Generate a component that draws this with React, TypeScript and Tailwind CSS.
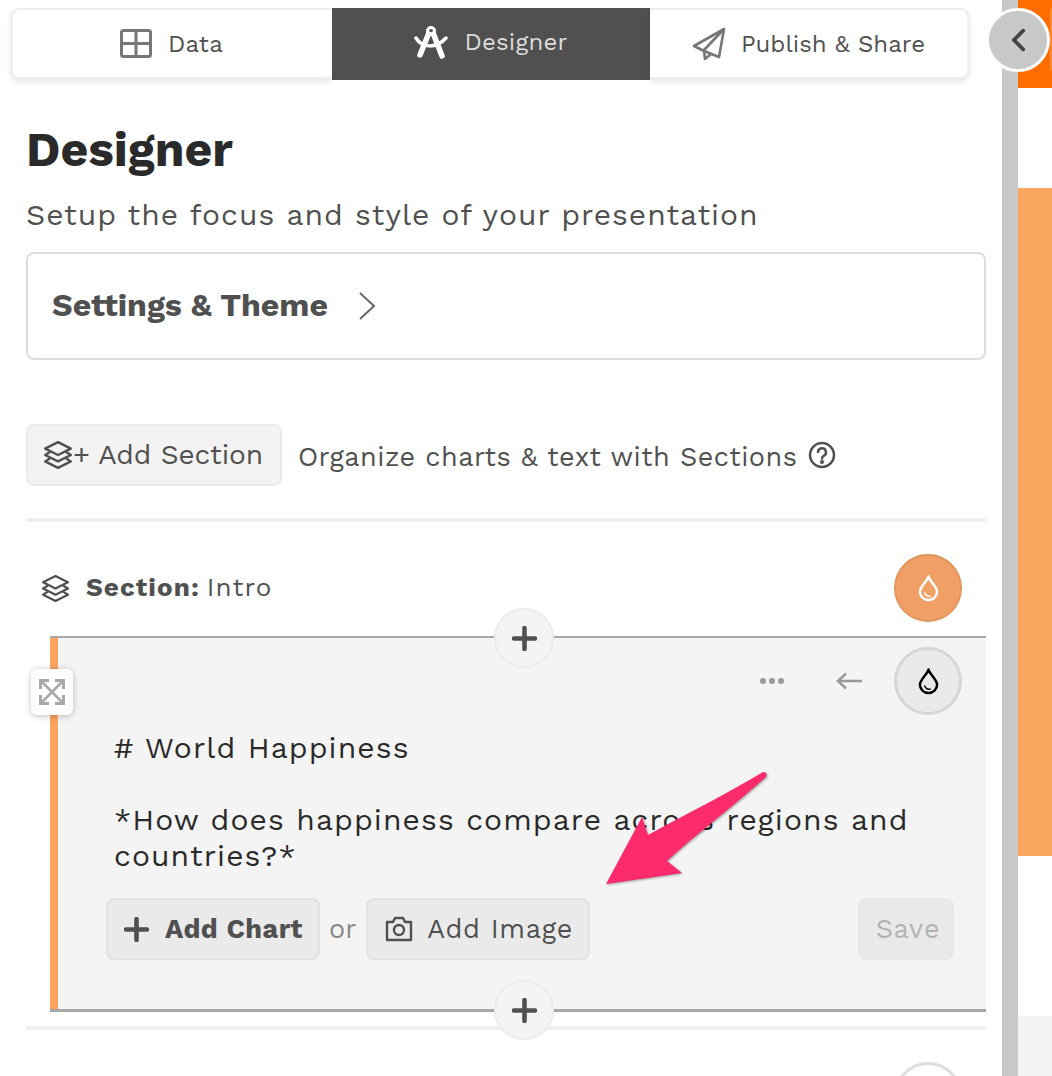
import React from "react";

const Layers = ({ className = "" }: { className?: string }) => (
  <svg viewBox="0 0 28 28" className={className} fill="none" stroke="currentColor" strokeWidth="2.2" strokeLinejoin="round" strokeLinecap="round">
    <path d="M14 2 L26 8 L14 14 L2 8 Z" />
    <path d="M6 11.5 L2 14 L14 20 L26 14 L22 11.5" />
    <path d="M6 17.5 L2 20 L14 26 L26 20 L22 17.5" />
  </svg>
);

const Drop = ({ className = "" }: { className?: string }) => (
  <svg viewBox="0 0 22 28" className={className} fill="none" stroke="currentColor" strokeWidth="2.6" strokeLinecap="round" strokeLinejoin="round">
    <path d="M11 2 C12 7 20 12 20 18 A9 8.5 0 0 1 2 18 C2 12 10 7 11 2 Z" />
    <path d="M7 19 C8 22 10 23 13 22.5" strokeWidth="1.4" />
  </svg>
);

const Plus = ({ className = "" }: { className?: string }) => (
  <svg viewBox="0 0 24 24" className={className} fill="none" stroke="currentColor" strokeWidth="4.4" strokeLinecap="round">
    <path d="M12 2 V22 M2 12 H22" />
  </svg>
);

const PlusCircle = ({ className }: { className: string }) => (
  <div className={`absolute left-[436px] w-[60px] h-[60px] rounded-full bg-[#f4f4f4] border-2 border-[#ececec] flex items-center justify-center text-[#505050] ${className}`}>
    <Plus className="w-[25px] h-[25px]" />
  </div>
);

export default function App() {
  return (
    <div className="relative flex w-[1052px] h-[1076px] overflow-hidden bg-white text-[#505050] font-['Work_Sans','Inter','Noto_Sans',sans-serif]">
      <div className="w-[1002px] shrink-0 relative">
        <div className="ml-[11px] mt-[8px] w-[958px] h-[72px] flex">
          <div className="w-[321px] h-[71px] flex items-center justify-center gap-[16px] pr-[2px] bg-white border-2 border-r-0 border-[#eeeeee] rounded-l-[8px] shadow-[0_3px_6px_rgba(0,0,0,0.1)] text-[24px] tracking-[0.2px]">
            <svg viewBox="0 0 32 30" className="w-[32px] h-[30px] text-[#777]" fill="none" stroke="currentColor" strokeWidth="3" strokeLinejoin="round">
              <rect x="1.5" y="1.5" width="29" height="26" rx="2" />
              <path d="M16 1.5 V27.5 M1.5 14.5 H30.5" />
            </svg>
            <span>Data</span>
          </div>
          <div className="w-[318px] h-[72px] flex items-center justify-center gap-[16px] pb-[4px] bg-[#505050] text-[#dcdcdc] text-[24px] tracking-[0.2px]">
            <svg viewBox="0 0 34 34" className="w-[34px] h-[34px] text-white" fill="none" stroke="currentColor" strokeLinecap="round">
              <circle cx="17" cy="6" r="3.5" strokeWidth="3" />
              <path d="M14.5 9 L6 30" strokeWidth="5.5" />
              <path d="M19.5 9 L28 31" strokeWidth="5.5" />
              <path d="M2 13 C8 23 22 24 32 13" strokeWidth="3.5" />
            </svg>
            <span>Designer</span>
          </div>
          <div className="w-[319px] h-[71px] flex items-center justify-center gap-[15px] bg-white border-2 border-l-0 border-[#eeeeee] rounded-r-[8px] shadow-[0_3px_6px_rgba(0,0,0,0.1)] text-[24px]">
            <svg viewBox="0 0 34 34" className="w-[34px] h-[34px] text-[#777]" fill="none" stroke="currentColor" strokeWidth="2.6" strokeLinejoin="round">
              <path d="M32 2 L2 19 L11 23.5 L27 30 Z" />
              <path d="M32 2 L12 23 L13 32 L19 27" />
            </svg>
            <span>Publish &amp; Share</span>
          </div>
        </div>

        <div className="ml-[26px] w-[960px]">
          <h1 className="mt-[40px] h-[60px] leading-[60px] text-[48px] font-bold text-[#2a2a2a]">Designer</h1>
          <p className="mt-[15px] h-[40px] leading-[40px] text-[30px] tracking-[1px] text-[#505050]">Setup the focus and style of your presentation</p>
          <div className="mt-[17px] h-[108px] border-2 border-[#dddddd] rounded-[8px] flex items-center pl-[24px] gap-[30px]">
            <span className="text-[32px] font-bold mb-[2px]">Settings &amp; Theme</span>
            <svg viewBox="0 0 18 30" className="w-[18px] h-[30px] text-[#666]" fill="none" stroke="currentColor" strokeWidth="2">
              <path d="M2 2 L16 15 L2 28" />
            </svg>
          </div>

          <div className="mt-[64px] flex items-center h-[62px]">
            <div className="w-[256px] h-[62px] bg-[#f3f3f3] border-2 border-[#ebebeb] rounded-[8px] flex items-center pl-[15px] text-[28px] tracking-[-0.1px]">
              <Layers className="w-[30px] h-[30px]" />
              <span>+ Add Section</span>
            </div>
            <span className="ml-[16px] mt-[4px] text-[27px] tracking-[0.49px]">Organize charts &amp; text with Sections</span>
            <svg viewBox="0 0 28 28" className="ml-[11px] w-[28px] h-[28px]" fill="none" stroke="currentColor" strokeWidth="2.5" strokeLinecap="round">
              <circle cx="14" cy="14" r="12" />
              <path d="M10 11 A4 4 0 1 1 15.5 15 C14.4 15.6 14 16 14 17.5" />
              <circle cx="14" cy="21" r="0.8" fill="currentColor" />
            </svg>
          </div>

          <div className="mt-[32px] h-[4px] bg-[#f0f0f0]" />

          <div className="mt-[32px] h-[68px] flex items-center pl-[15px] pr-[24px] text-[26px] tracking-[1.1px]">
            <Layers className="w-[29px] h-[29px]" />
            <span className="ml-[16px] font-bold mb-[2px]">Section:</span>
            <span className="ml-[7px] mb-[2px]">Intro</span>
            <div className="ml-auto w-[68px] h-[68px] rounded-full bg-[#f0a064] border-2 border-[#e0945c] flex items-center justify-center text-white">
              <Drop className="w-[21px] h-[28px]" />
            </div>
          </div>

          <div className="relative flow-root ml-[24px] mt-[14px] h-[376px] bg-[#f4f4f4] border-l-[8px] border-[#faa460]">
            <div className="absolute -left-[8px] right-0 top-0 h-[2px] bg-[#aaaaaa]" />
            <div className="absolute -left-[8px] right-0 bottom-0 h-[3px] bg-[#a8a8a8]" />
            <div className="flex items-center justify-end h-[68px] mt-[11px] mr-[24px] text-[#999]">
              <div className="flex gap-[3px] mr-[52px]">
                <span className="w-[6px] h-[6px] rounded-full bg-[#999]" />
                <span className="w-[6px] h-[6px] rounded-full bg-[#999]" />
                <span className="w-[6px] h-[6px] rounded-full bg-[#999]" />
              </div>
              <svg viewBox="0 0 26 18" className="w-[26px] h-[18px] mr-[32px]" fill="none" stroke="currentColor" strokeWidth="2.5">
                <path d="M26 9 H2 M10 1.5 L2 9 L10 16.5" />
              </svg>
              <div className="w-[68px] h-[68px] rounded-full bg-[#eaeaea] border-[3px] border-[#d6d6d6] flex items-center justify-center text-black">
                <Drop className="w-[21px] h-[28px]" />
              </div>
            </div>
            <div className="ml-[56px] mr-[60px] mt-[15px] text-[30px] leading-[36px] tracking-[1.1px] text-[#2a2a2a]">
              <p># World Happiness</p>
              <p className="mt-[36px]">*How does happiness compare across regions and countries?*</p>
            </div>
            <div className="ml-[48px] mr-[32px] mt-[24px] flex items-center h-[62px]">
              <div className="w-[214px] h-[62px] bg-[#eaeaea] border-2 border-[#e2e2e2] rounded-[8px] flex items-center pl-[16px] gap-[16px]">
                <Plus className="w-[25px] h-[25px]" />
                <span className="text-[27px] font-bold tracking-[0.5px]">Add Chart</span>
              </div>
              <span className="ml-[9px] text-[27px] text-[#888]">or</span>
              <div className="ml-[10px] w-[224px] h-[62px] bg-[#eaeaea] border-2 border-[#e2e2e2] rounded-[8px] flex items-center pl-[17px] gap-[14px]">
                <svg viewBox="0 0 28 26" className="w-[28px] h-[26px]" fill="none" stroke="currentColor" strokeWidth="2.4" strokeLinejoin="round">
                  <path d="M2 6 H8 L10 2 H18 L20 6 H26 V24 H2 Z" />
                  <circle cx="14" cy="14" r="5" />
                </svg>
                <span className="text-[27px] tracking-[0.7px]">Add Image</span>
              </div>
              <div className="ml-auto w-[96px] h-[62px] bg-[#e9e9e9] rounded-[8px] flex items-center justify-center pl-[4px] text-[27px] tracking-[0.75px] text-[#b2b2b2]">Save</div>
            </div>
            <PlusCircle className="-top-[28px]" />
            <PlusCircle className="-bottom-[28px]" />
          </div>

          <div className="mt-[14px] h-[4px] bg-[#f0f0f0]" />
        </div>

        <div className="absolute left-[894px] top-[1062px] w-[68px] h-[68px] rounded-full bg-white border-[3px] border-[#dddddd]" />
        <div className="absolute left-[31px] top-[669px] w-[42px] h-[46px] bg-white rounded-[6px] shadow-[0_1px_6px_rgba(0,0,0,0.25)] flex items-center justify-center text-[#aaa]">
          <svg viewBox="0 0 26 26" className="w-[26px] h-[26px]" fill="none" stroke="currentColor" strokeWidth="2.5">
            <path d="M2 2 L24 24 M24 2 L2 24" />
            <path d="M1.5 10 V1.5 H10 M16 1.5 H24.5 V10 M24.5 16 V24.5 H16 M10 24.5 H1.5 V16" strokeWidth="3" />
          </svg>
        </div>
      </div>

      <div className="w-[16px] shrink-0 bg-[#c8c8c8]" />

      <div className="flex-1 flex flex-col">
        <div className="h-[88px] bg-[#ff6d00]" />
        <div className="h-[100px] bg-white" />
        <div className="h-[668px] bg-[#fba762]" />
        <div className="h-[160px] bg-white" />
        <div className="flex-1 bg-[#f2f2f2]" />
      </div>

      <div className="absolute left-[1050px] top-[8px] w-[4px] h-[63px] rounded-l-[3px] bg-[#ff8a33]" />

      <div className="absolute left-[986px] top-[8px] w-[64px] h-[64px] rounded-full bg-[#c8c8c8] border-[3px] border-white flex items-center justify-center text-[#444]">
        <svg viewBox="0 0 16 24" className="w-[15px] h-[24px]" fill="none" stroke="currentColor" strokeWidth="4" strokeLinecap="round" strokeLinejoin="round">
          <path d="M13 2 L3 12 L13 22" />
        </svg>
      </div>

      <svg viewBox="0 0 1052 1076" className="absolute left-0 top-0 w-[1052px] h-[1076px] pointer-events-none">
        <path d="M606 884 L642 817 L648 835 C690 812 730 792 763 772 Q768 772 766 777 C735 805 695 835 667 861 L682 873 Z" fill="#fd2a6c" style={{ filter: "drop-shadow(1px 1px 1px rgba(0,0,0,0.35))" }} />
      </svg>
    </div>
  );
}
